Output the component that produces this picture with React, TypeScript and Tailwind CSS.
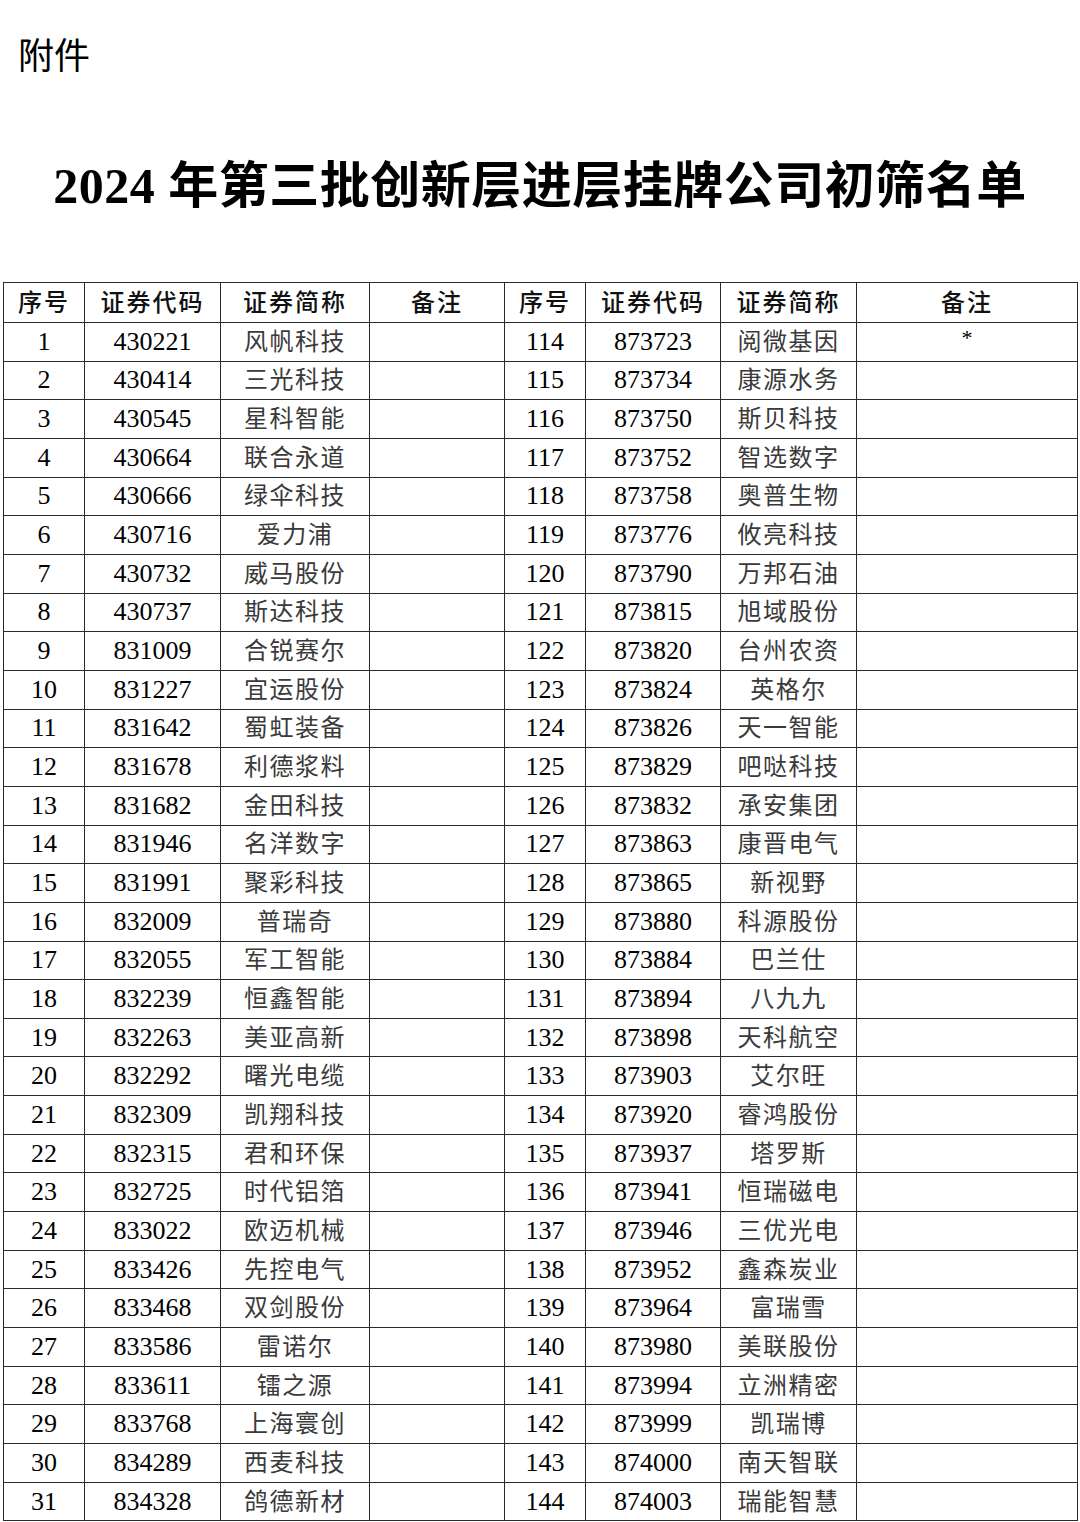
const left: [string, string, string, string][] = [
  ['1', '430221', '风帆科技', ''],
  ['2', '430414', '三光科技', ''],
  ['3', '430545', '星科智能', ''],
  ['4', '430664', '联合永道', ''],
  ['5', '430666', '绿伞科技', ''],
  ['6', '430716', '爱力浦', ''],
  ['7', '430732', '威马股份', ''],
  ['8', '430737', '斯达科技', ''],
  ['9', '831009', '合锐赛尔', ''],
  ['10', '831227', '宜运股份', ''],
  ['11', '831642', '蜀虹装备', ''],
  ['12', '831678', '利德浆料', ''],
  ['13', '831682', '金田科技', ''],
  ['14', '831946', '名洋数字', ''],
  ['15', '831991', '聚彩科技', ''],
  ['16', '832009', '普瑞奇', ''],
  ['17', '832055', '军工智能', ''],
  ['18', '832239', '恒鑫智能', ''],
  ['19', '832263', '美亚高新', ''],
  ['20', '832292', '曙光电缆', ''],
  ['21', '832309', '凯翔科技', ''],
  ['22', '832315', '君和环保', ''],
  ['23', '832725', '时代铝箔', ''],
  ['24', '833022', '欧迈机械', ''],
  ['25', '833426', '先控电气', ''],
  ['26', '833468', '双剑股份', ''],
  ['27', '833586', '雷诺尔', ''],
  ['28', '833611', '镭之源', ''],
  ['29', '833768', '上海寰创', ''],
  ['30', '834289', '西麦科技', ''],
  ['31', '834328', '鸽德新材', ''],
];

const right: [string, string, string, string][] = [
  ['114', '873723', '阅微基因', '*'],
  ['115', '873734', '康源水务', ''],
  ['116', '873750', '斯贝科技', ''],
  ['117', '873752', '智选数字', ''],
  ['118', '873758', '奥普生物', ''],
  ['119', '873776', '攸亮科技', ''],
  ['120', '873790', '万邦石油', ''],
  ['121', '873815', '旭域股份', ''],
  ['122', '873820', '台州农资', ''],
  ['123', '873824', '英格尔', ''],
  ['124', '873826', '天一智能', ''],
  ['125', '873829', '吧哒科技', ''],
  ['126', '873832', '承安集团', ''],
  ['127', '873863', '康晋电气', ''],
  ['128', '873865', '新视野', ''],
  ['129', '873880', '科源股份', ''],
  ['130', '873884', '巴兰仕', ''],
  ['131', '873894', '八九九', ''],
  ['132', '873898', '天科航空', ''],
  ['133', '873903', '艾尔旺', ''],
  ['134', '873920', '睿鸿股份', ''],
  ['135', '873937', '塔罗斯', ''],
  ['136', '873941', '恒瑞磁电', ''],
  ['137', '873946', '三优光电', ''],
  ['138', '873952', '鑫森炭业', ''],
  ['139', '873964', '富瑞雪', ''],
  ['140', '873980', '美联股份', ''],
  ['141', '873994', '立洲精密', ''],
  ['142', '873999', '凯瑞博', ''],
  ['143', '874000', '南天智联', ''],
  ['144', '874003', '瑞能智慧', ''],
];

const headers = ['序号', '证券代码', '证券简称', '备注', '序号', '证券代码', '证券简称', '备注'];
const widths = ['w-[81px]', 'w-[136px]', 'w-[149px]', 'w-[135px]', 'w-[81px]', 'w-[135px]', 'w-[136px]', 'w-[221px]'];

// serif stack first: digits get Times metrics, Chinese falls through to Noto
const cell = 'border border-[#2a2a2a] p-0 text-center align-middle leading-none';
const num = 'text-[26px] text-black';
const name = 'text-[24px] tracking-[1.5px] text-[#3a3a3a]';

type Entry = [string, string, string, string];

function Row({ l, r }: { l: Entry; r: Entry }) {
  return (
    <tr className="h-[38.67px]">
      <td className={`${cell} ${num}`}>{l[0]}</td>
      <td className={`${cell} ${num}`}>{l[1]}</td>
      <td className={`${cell} ${name}`}>{l[2]}</td>
      <td className={`${cell} ${num}`}>{l[3]}</td>
      <td className={`${cell} ${num}`}>{r[0]}</td>
      <td className={`${cell} ${num}`}>{r[1]}</td>
      <td className={`${cell} ${name}`}>{r[2]}</td>
      <td className={`${cell} pt-[4px] align-top text-[22px]`}>{r[3]}</td>
    </tr>
  );
}

export default function App() {
  return (
    <div className="h-[1522px] w-[1080px] overflow-hidden bg-white font-['Liberation_Serif','Noto_Sans_CJK_SC',serif]">
      <div className="pl-[18px] pt-[30px] font-['Noto_Sans_CJK_SC',sans-serif] text-[36px] leading-[46px] text-black">
        附件
      </div>
      <h1 className="mt-[80px] text-center text-[50px] font-bold leading-[60px] tracking-[0.5px] text-black">
        2024 年第三批创新层进层挂牌公司初筛名单
      </h1>
      <table className="ml-[3px] mt-[66px] w-[1074px] table-fixed border-collapse">
        <colgroup>
          {widths.map((w, i) => (
            <col key={i} className={w} />
          ))}
        </colgroup>
        <thead>
          <tr className="h-[40px]">
            {headers.map((h, i) => (
              <th key={i} className={`${cell} text-[24px] font-medium tracking-[2px] text-[#111]`}>
                {h}
              </th>
            ))}
          </tr>
        </thead>
        <tbody>
          {left.map((l, i) => (
            <Row key={i} l={l} r={right[i]} />
          ))}
        </tbody>
      </table>
    </div>
  );
}
